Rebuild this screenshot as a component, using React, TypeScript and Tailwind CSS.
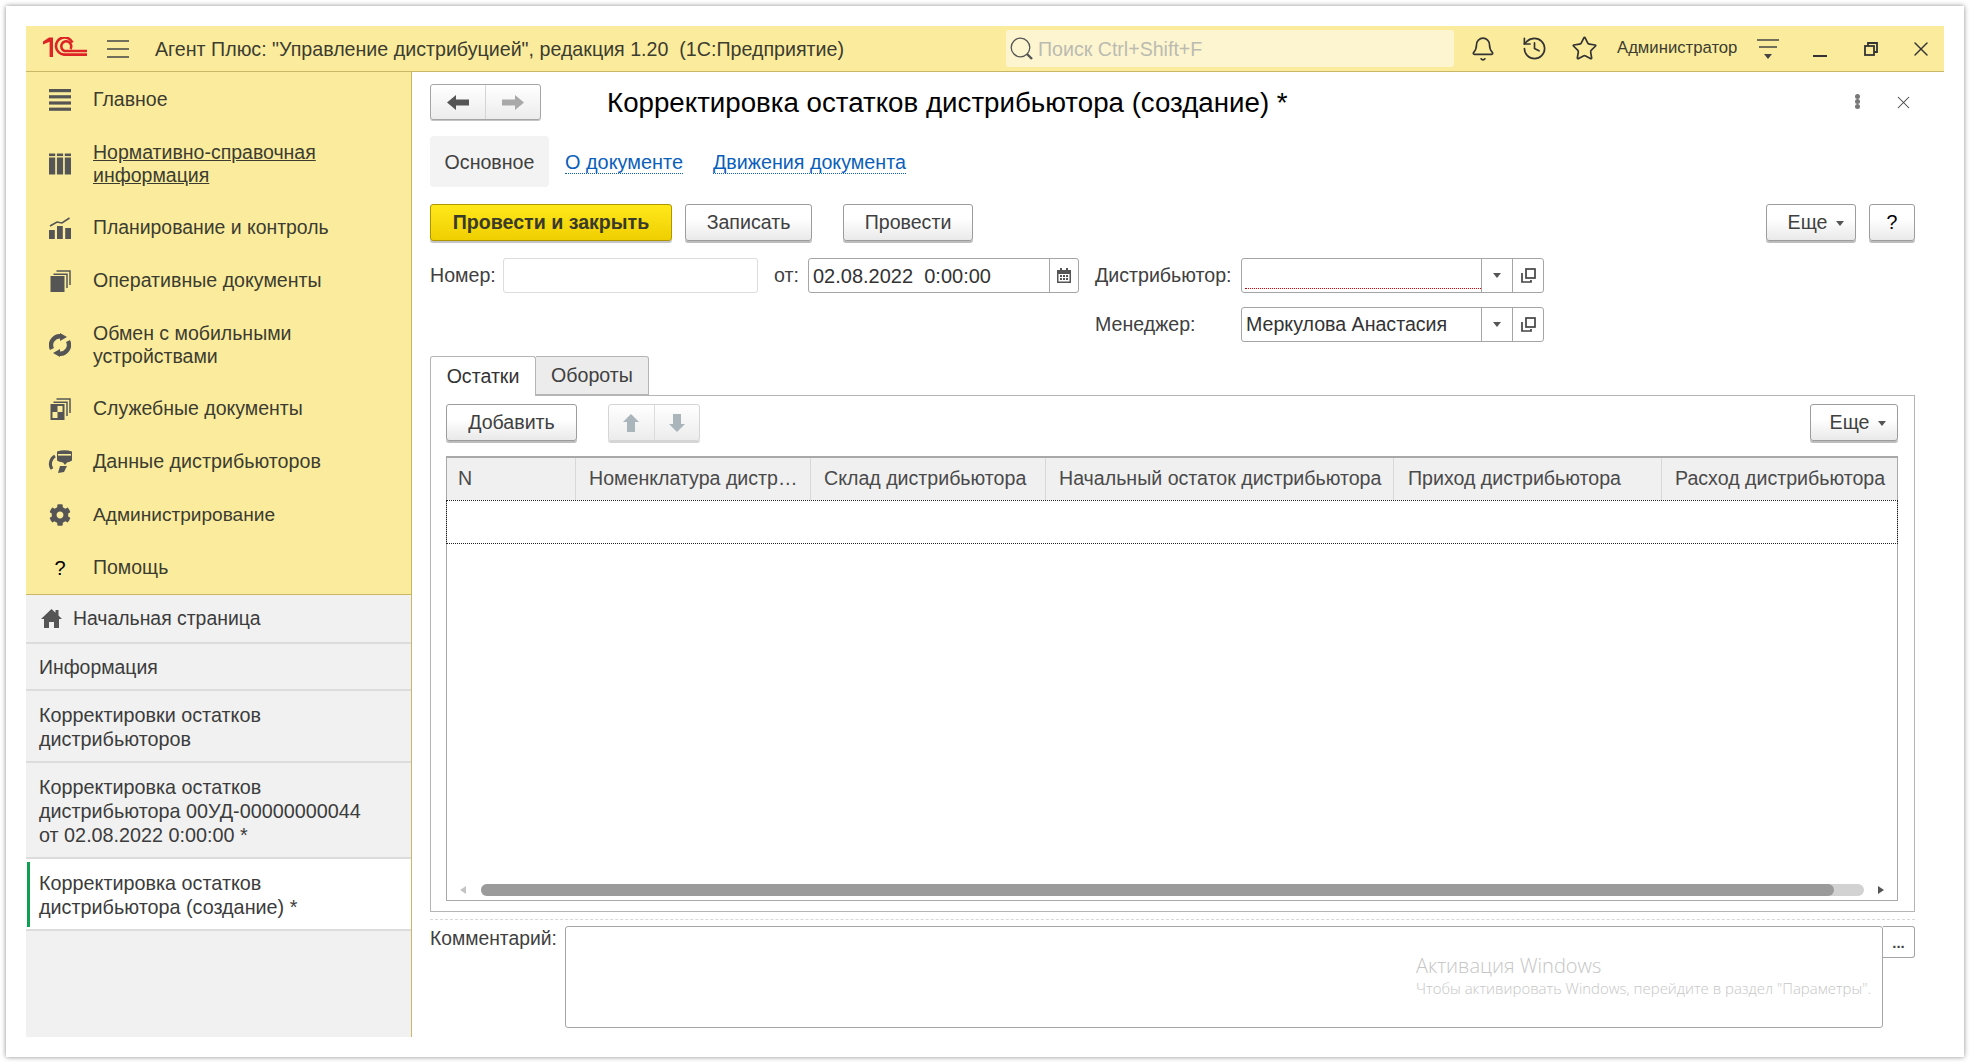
import { Bell, History, Star, X } from "lucide-react";
import { FaCog } from "react-icons/fa";
import type { ReactNode } from "react";

const Logo = () => (
  <svg width="44" height="21" viewBox="0 0 44 21" fill="none">
    <path d="M0 4.5 L6 0.5 H10 V20 H6.6 V4.8 L0 7.6 Z" fill="#dd2326" />
    <path d="M29.5 5.6 A8.6 8.6 0 1 0 21 17.6 H44" stroke="#dd2326" strokeWidth="2.6" />
    <path d="M27.5 12 A5 5 0 1 0 21.5 14 H44" stroke="#dd2326" strokeWidth="2.6" />
  </svg>
);

const MenuBars = () => (
  <svg width="22" height="22" viewBox="0 0 22 22" fill="#555">
    <rect y="0" width="22" height="3.2" /><rect y="6.2" width="22" height="3.2" />
    <rect y="12.4" width="22" height="3.2" /><rect y="18.6" width="22" height="3.2" />
  </svg>
);
const Columns = () => (
  <svg width="22" height="22" viewBox="0 0 22 22" fill="#555">
    <rect x="0" y="0.5" width="6.2" height="2.6" /><rect x="7.9" y="0.5" width="6.2" height="2.6" /><rect x="15.8" y="0.5" width="6.2" height="2.6" />
    <rect x="0" y="4.5" width="6.2" height="17" /><rect x="7.9" y="4.5" width="6.2" height="17" /><rect x="15.8" y="4.5" width="6.2" height="17" />
  </svg>
);
const Plan = () => (
  <svg width="22" height="22" viewBox="0 0 22 22" fill="#555">
    <rect x="0" y="13" width="5.8" height="9" /><rect x="8" y="9" width="5.8" height="13" /><rect x="16.2" y="11" width="5.8" height="11" />
    <path d="M1 9 L8 5 L13 6 L20.5 1" stroke="#555" strokeWidth="1.6" fill="none" />
  </svg>
);
const Docs = () => (
  <svg width="22" height="22" viewBox="0 0 22 22" fill="none">
    <rect x="1.5" y="6" width="14" height="16" fill="#555" />
    <path d="M4.5 4.3 H18 V18" stroke="#555" strokeWidth="1.5" />
    <path d="M7.5 1 H21 V15" stroke="#555" strokeWidth="1.5" />
  </svg>
);
const DocsCheck = () => (
  <svg width="22" height="22" viewBox="0 0 22 22" fill="none">
    <rect x="1.5" y="6" width="14" height="16" fill="#555" />
    <rect x="8.5" y="8" width="5" height="6" fill="#fbec9d" /><rect x="3.5" y="14" width="5" height="6" fill="#fbec9d" />
    <path d="M4.5 4.3 H18 V18" stroke="#555" strokeWidth="1.5" />
    <path d="M7.5 1 H21 V15" stroke="#555" strokeWidth="1.5" />
  </svg>
);
const Sync = () => (
  <svg width="22" height="24" viewBox="0 0 22 24" fill="none">
    <path d="M3 16 A8.8 8.8 0 0 1 12 3.3" stroke="#555" strokeWidth="4.4" />
    <path d="M19 8 A8.8 8.8 0 0 1 10 20.7" stroke="#555" strokeWidth="4.4" />
    <path d="M11 0 L18 4 L11 8 Z" fill="#555" /><path d="M11 16 L4 20 L11 24 Z" fill="#555" />
  </svg>
);
const DataIcon = () => (
  <svg width="24" height="23" viewBox="0 0 24 23" fill="none">
    <path d="M9 1.5 Q16.5 -1 24 1.5 V10.5 Q22 12 19 12.5 L17 15 L15 12.5 Q11 12 9 10.5 Z" fill="#555" />
    <rect x="10" y="4" width="13" height="1.6" fill="#fbec9d" />
    <path d="M7 6 A9 9 0 0 0 4 19" stroke="#555" strokeWidth="3" />
    <path d="M10 23 L12 16 H19 L16 22 Z" fill="#555" />
  </svg>
);
const HomeIcon = () => (
  <svg width="21" height="19" viewBox="0 0 21 19" fill="#555">
    <path d="M0 10 L10.5 0 L14.5 3.8 V1 H17.5 V6.6 L21 10 H18 V19 H13 V13 H8 V19 H3 V10 Z" />
  </svg>
);
const HamburgerThin = () => (
  <svg width="22" height="18" viewBox="0 0 22 18" stroke="#444" strokeWidth="1.4">
    <path d="M0 1 H22 M0 9 H22 M0 17 H22" />
  </svg>
);
const SearchIcon = () => (
  <svg width="23" height="23" viewBox="0 0 23 23" fill="none" stroke="#555">
    <circle cx="10.5" cy="10.5" r="9.3" strokeWidth="1.3" />
    <path d="M17 17 L22 22" strokeWidth="2.4" />
  </svg>
);
const FilterIcon = () => (
  <svg width="22" height="20" viewBox="0 0 22 20">
    <path d="M0 1 H22 M2 8 H20" stroke="#444" strokeWidth="1.3" />
    <path d="M7 15 H15 L11 20 Z" fill="#444" />
  </svg>
);
const Restore = () => (
  <svg width="14" height="14" viewBox="0 0 14 14" fill="none" stroke="#333" strokeWidth="1.8">
    <rect x="1" y="4" width="9" height="9" /><path d="M4 4 V1 H13 V10 H10" />
  </svg>
);
const ArrowH = ({ right, fill }: { right?: boolean; fill: string }) => (
  <svg width="22" height="15" viewBox="0 0 22 15" fill={fill} className={right ? "rotate-180" : ""}>
    <path d="M0 7.5 L9 0 V4.5 H22 V10.5 H9 V15 Z" />
  </svg>
);
const ArrowV = ({ down, fill }: { down?: boolean; fill: string }) => (
  <svg width="16" height="18" viewBox="0 0 16 18" fill={fill} className={down ? "rotate-180" : ""}>
    <path d="M8 0 L16 8 H12 V18 H4 V8 H0 Z" />
  </svg>
);
const OpenIcon = () => (
  <svg width="15" height="15" viewBox="0 0 15 15" fill="none" stroke="#444" strokeWidth="1.7">
    <rect x="5" y="1" width="9" height="9" /><path d="M1 5 V14 H10 V12" />
  </svg>
);
const CalendarIcon = () => (
  <svg width="14" height="15" viewBox="0 0 14 15" fill="#555">
    <path d="M0 2 H3 V0 H5 V2 H9 V0 H11 V2 H14 V15 H0 Z M1.5 6 V13.5 H12.5 V6 Z" />
    <rect x="3" y="7" width="2" height="2" /><rect x="6" y="7" width="2" height="2" /><rect x="9" y="7" width="2" height="2" />
    <rect x="3" y="10" width="2" height="2" /><rect x="6" y="10" width="2" height="2" /><rect x="9" y="10" width="2" height="2" />
  </svg>
);
const Caret = ({ color = "#555" }: { color?: string }) => (
  <svg width="8" height="5" viewBox="0 0 8 5" fill={color}><path d="M0 0 H8 L4 5 Z" /></svg>
);

const menu: { icon: ReactNode; lines: string[]; underline?: boolean; cls?: string }[] = [
  { icon: <MenuBars />, lines: ["Главное"] },
  { icon: <Columns />, lines: ["Нормативно-справочная", "информация"], underline: true },
  { icon: <Plan />, lines: ["Планирование и контроль"], cls: "text-[19.4px]" },
  { icon: <Docs />, lines: ["Оперативные документы"], cls: "text-[19.6px]" },
  { icon: <Sync />, lines: ["Обмен с мобильными", "устройствами"] },
  { icon: <DocsCheck />, lines: ["Служебные документы"] },
  { icon: <DataIcon />, lines: ["Данные дистрибьюторов"], cls: "text-[19.7px]" },
  { icon: <FaCog size={22} color="#555" />, lines: ["Администрирование"], cls: "text-[19.1px]" },
  { icon: <span className="text-[20px] text-black">?</span>, lines: ["Помощь"] },
];

const btn =
  "flex h-[37px] items-center justify-center rounded-[3px] border border-[#9c9c9c] bg-gradient-to-b from-white from-40% to-[#e9e9e9] pt-[1px] shadow-[0_2px_0_#bdbdbd] text-[#404040]";

export default function App() {
  return (
    <div className="h-[1063px] w-[1970px] overflow-hidden bg-white pl-[6px] pt-[6px] font-['Liberation_Sans',Arial,sans-serif] text-[19.6px]">
      <div className="h-[1051px] w-[1958px] bg-white p-[20px] shadow-[0_0_5px_rgba(0,0,0,0.45)]">
        <div className="flex h-[1011px] w-[1918px] flex-col">
          {/* Top bar */}
          <header className="flex h-[46px] shrink-0 items-center border-b border-[#c9b766] bg-[#fbec9d] text-[#3c3c30]">
            <div className="mb-[2px] ml-[17px] w-[44px]"><Logo /></div>
            <div className="ml-[20px] w-[22px]"><HamburgerThin /></div>
            <div className="ml-[26px] w-[851px] whitespace-pre pt-[3px] text-[19.65px]">Агент Плюс: "Управление дистрибуцией", редакция 1.20  (1С:Предприятие)</div>
            <div className="flex h-[37px] w-[448px] items-center rounded-[3px] bg-[#fdf5d0] pl-[4px] text-[#bbbbb0]">
              <SearchIcon />
              <span className="ml-[5px] pt-[3px] text-[19.6px]">Поиск Ctrl+Shift+F</span>
            </div>
            <Bell size={26} strokeWidth={1.5} color="#333" className="ml-[16px]" />
            <History size={27} strokeWidth={1.5} color="#333" className="ml-[25px]" />
            <Star size={27} strokeWidth={1.5} color="#333" className="ml-[23px]" />
            <span className="mb-[1px] ml-[19px] w-[120px] whitespace-nowrap text-[16.7px]">Администратор</span>
            <div className="ml-[20px]"><FilterIcon /></div>
            <div className="ml-[34px] mt-[15px] h-[2px] w-[14px] bg-[#333]" />
            <div className="ml-[37px]"><Restore /></div>
            <X size={24} strokeWidth={1.4} color="#333" className="ml-[31px]" />
          </header>

          <div className="flex min-h-0 flex-1">
            {/* Sidebar */}
            <aside className="flex w-[386px] shrink-0 flex-col border-r border-[#c9b766] bg-[#f1f1f1] text-[19.8px] text-[#3c3c3c]">
              <nav className="border-b border-[#c9b766] bg-[#fbec9d] pt-[1px] text-[19.5px] text-[#3c3c30]">
                {menu.map((m, i) => (
                  <div key={i} className={`flex items-center ${m.lines.length > 1 ? "h-[75px]" : "h-[53px]"}`}>
                    <div className="flex w-[67px] shrink-0 justify-center pl-[1px]">{m.icon}</div>
                    <div className={`leading-[23px] ${m.underline ? "underline" : ""} ${m.cls ?? ""}`}>
                      {m.lines.map((l) => <div key={l}>{l}</div>)}
                    </div>
                  </div>
                ))}
              </nav>
              <div className="flex h-[49px] items-center border-b-2 border-[#dcdcdc] pl-[15px] text-[19.4px]">
                <HomeIcon />
                <span className="ml-[11px] pt-[1px]">Начальная страница</span>
              </div>
              <div className="flex h-[47px] items-center border-b-2 border-[#dcdcdc] pl-[13px] pt-[2px] text-[19.4px]">Информация</div>
              <div className="flex h-[72px] items-center border-b-2 border-[#dcdcdc] pl-[13px] pt-[2px] leading-[24px]">
                <div>Корректировки остатков<br />дистрибьюторов</div>
              </div>
              <div className="flex h-[96px] items-center border-b-2 border-[#dcdcdc] pl-[13px] pt-[2px] leading-[24px]">
                <div>Корректировка остатков<br />дистрибьютора 00УД-00000000044<br />от 02.08.2022 0:00:00 *</div>
              </div>
              <div className="flex h-[72px] items-center border-b-2 border-[#dcdcdc] bg-white pl-[1px] leading-[24px]">
                <div className="h-[65px] w-[3px] bg-[#0e9f50]" />
                <div className="ml-[9px] pt-[2px]">Корректировка остатков<br />дистрибьютора (создание) *</div>
              </div>
            </aside>

            {/* Main */}
            <main className="flex min-w-0 flex-1 flex-col bg-white pl-[18px] pr-[29px] pt-[12px] text-[#404040]">
              <div className="flex h-[36px] shrink-0 items-center">
                <div className="flex h-[36px] w-[111px] rounded-[3px] border border-[#a5a5a5] bg-gradient-to-b from-white to-[#ececec] shadow-[0_1px_0_#c4c4c4]">
                  <div className="flex w-[55px] items-center justify-center border-r border-[#d4d4d4]"><ArrowH fill="#555" /></div>
                  <div className="flex flex-1 items-center justify-center"><ArrowH right fill="#a9a9a9" /></div>
                </div>
                <h1 className="ml-[66px] flex-1 pt-[2px] text-[27.7px] font-normal text-black">Корректировка остатков дистрибьютора (создание) *</h1>
                <div className="-mt-[2px] flex flex-col">
                  <i className="h-[5px] w-[5px] rounded-full bg-[#777]" /><i className="h-[5px] w-[5px] rounded-full bg-[#777]" /><i className="h-[5px] w-[5px] rounded-full bg-[#777]" />
                </div>
                <X size={21} strokeWidth={1.2} color="#444" className="ml-[33px] mr-[1px]" />
              </div>

              <div className="mt-[16px] flex h-[51px] shrink-0 items-center">
                <div className="flex h-full w-[119px] items-center justify-center rounded-[4px] bg-[#f3f3f3] pt-[2px]">Основное</div>
                <a className="ml-[16px] mt-[2px] border-b border-dotted border-[#0b5fba] text-[19.9px] leading-[21px] text-[#0b5fba]">О документе</a>
                <a className="ml-[30px] mt-[2px] border-b border-dotted border-[#0b5fba] text-[19.7px] leading-[21px] text-[#0b5fba]">Движения документа</a>
              </div>

              <div className="mt-[17px] flex h-[39px] shrink-0">
                <button className="flex h-[37px] w-[242px] items-center justify-center rounded-[3px] border border-[#ad9600] bg-gradient-to-b from-[#ffe81a] to-[#efcf00] pt-[1px] font-bold text-[#3a3a2a] shadow-[0_2px_0_#c4c4c4]">Провести и закрыть</button>
                <button className={`${btn} ml-[13px] w-[127px]`}>Записать</button>
                <button className={`${btn} ml-[31px] w-[130px]`}>Провести</button>
                <button className={`${btn} ml-auto w-[90px] gap-[9px] pl-[10px]`}>Еще <Caret /></button>
                <button className={`${btn} ml-[13px] w-[46px] text-black`}>?</button>
              </div>

              <div className="mt-[15px] flex h-[35px] shrink-0 items-center">
                <span className="w-[73px] pt-[1px]">Номер:</span>
                <div className="h-full w-[255px] rounded-[3px] border border-[#dcdcdc]" />
                <span className="ml-[16px] w-[34px]">от:</span>
                <div className="flex h-full w-[271px] items-center rounded-[3px] border border-[#a5a5a5]">
                  <span className="w-[240px] whitespace-pre pl-[4px] text-[20px] text-[#333]">02.08.2022  0:00:00</span>
                  <div className="flex h-full flex-1 items-center justify-center border-l border-[#a5a5a5]"><CalendarIcon /></div>
                </div>
                <span className="ml-[16px] w-[146px]">Дистрибьютор:</span>
                <div className="relative flex h-full w-[303px] items-center rounded-[3px] border border-[#a5a5a5]">
                  <div className="absolute bottom-[3px] left-[3px] w-[236px] border-b border-dotted border-[#d00000]" />
                  <div className="flex-1" />
                  <div className="flex h-full w-[31px] items-center justify-center border-l border-[#a5a5a5]"><Caret /></div>
                  <div className="flex h-full w-[31px] items-center justify-center border-l border-[#a5a5a5]"><OpenIcon /></div>
                </div>
              </div>

              <div className="mt-[14px] flex h-[35px] shrink-0 items-center pl-[665px]">
                <span className="w-[146px] pt-[1px]">Менеджер:</span>
                <div className="flex h-full w-[303px] items-center rounded-[3px] border border-[#a5a5a5]">
                  <div className="flex-1 pl-[4px] pt-[1px] text-[#333]">Меркулова Анастасия</div>
                  <div className="flex h-full w-[31px] items-center justify-center border-l border-[#a5a5a5]"><Caret /></div>
                  <div className="flex h-full w-[31px] items-center justify-center border-l border-[#a5a5a5]"><OpenIcon /></div>
                </div>
              </div>

              {/* Tabs */}
              <div className="relative z-10 mt-[14px] flex h-[40px] shrink-0">
                <div className="flex h-[40px] w-[106px] items-center justify-center rounded-t-[3px] border border-b-0 border-[#b5b5b5] bg-white text-[#333]">Остатки</div>
                <div className="flex h-[39px] w-[113px] items-center justify-center rounded-tr-[3px] border border-l-0 border-[#b5b5b5] bg-[#ececec]">Обороты</div>
              </div>
              <section className="-mt-[1px] ml-0 flex h-[517px] w-[1485px] shrink-0 flex-col border border-[#b5b5b5] pb-[10px] pl-[15px] pr-[16px] pt-[8px]">
                <div className="flex h-[39px] shrink-0">
                  <button className={`${btn} w-[131px]`}>Добавить</button>
                  <div className="ml-[31px] flex h-[37px] w-[92px] rounded-[3px] border border-[#d5d5d5] bg-gradient-to-b from-white to-[#ececec] shadow-[0_2px_0_#d5d5d5]">
                    <div className="flex flex-1 items-center justify-center border-r border-[#dcdcdc]"><ArrowV fill="#a9b5ba" /></div>
                    <div className="flex flex-1 items-center justify-center"><ArrowV down fill="#a9b5ba" /></div>
                  </div>
                  <button className={`${btn} ml-auto w-[88px] gap-[9px] pl-[8px]`}>Еще <Caret /></button>
                </div>
                <div className="mt-[13px] flex min-h-0 flex-1 flex-col border border-t-2 border-[#a8a8a8]">
                  <div className="grid h-[42px] shrink-0 grid-cols-[129px_235px_235px_348px_268px_235px] bg-[#f0f0f0] text-[#4a4a4a]">
                    <div className="flex items-center border-r border-[#d8d8d8] pl-[11px]">N</div>
                    <div className="flex items-center whitespace-nowrap border-r border-[#d8d8d8] pl-[13px]">Номенклатура дистр…</div>
                    <div className="flex items-center whitespace-nowrap border-r border-[#d8d8d8] pl-[13px]">Склад дистрибьютора</div>
                    <div className="flex items-center whitespace-nowrap border-r border-[#d8d8d8] pl-[13px]">Начальный остаток дистрибьютора</div>
                    <div className="flex items-center whitespace-nowrap border-r border-[#d8d8d8] pl-[14px]">Приход дистрибьютора</div>
                    <div className="flex items-center whitespace-nowrap pl-[13px]">Расход дистрибьютора</div>
                  </div>
                  <div className="-mx-[1px] h-[44px] shrink-0 border border-dotted border-[#222]" />
                  <div className="flex-1" />
                  <div className="mb-[4px] flex h-[12px] shrink-0 items-center pl-[13px]">
                    <div className="h-0 w-0 border-y-[4px] border-r-[6px] border-y-transparent border-r-[#c4c4c4]" />
                    <div className="ml-[15px] h-[12px] w-[1383px] rounded-full bg-[#d2d2d2]">
                      <div className="h-full w-[1353px] rounded-full bg-[#9b9b9b]" />
                    </div>
                    <div className="ml-[14px] h-0 w-0 border-y-[4px] border-l-[6px] border-y-transparent border-l-[#555]" />
                  </div>
                </div>
              </section>

              <div className="mt-[7px] w-[1485px] shrink-0 border-t border-dashed border-[#d8d8d8]" />
              <div className="mt-[6px] flex h-[102px] w-[1485px] shrink-0">
                <span className="w-[135px] pt-[1px] text-[19.3px] leading-[23px]">Комментарий:</span>
                <div className="relative h-full w-[1318px] rounded-[3px] border border-[#a5a5a5]">
                  <div className="absolute left-[850px] top-[26px] font-['Open_Sans',sans-serif] text-[#c6c6c6]">
                    <div className="text-[20px] font-light leading-[25px]">Активация Windows</div>
                    <div className="whitespace-nowrap text-[14.95px] font-light leading-[20px]">Чтобы активировать Windows, перейдите в раздел "Параметры".</div>
                  </div>
                </div>
                <div className="flex h-[32px] w-[32px] items-center justify-center rounded-r-[3px] border border-l-0 border-[#a5a5a5] text-[15px] font-bold leading-none text-[#444]">...</div>
              </div>
            </main>
          </div>
        </div>
      </div>
    </div>
  );
}
